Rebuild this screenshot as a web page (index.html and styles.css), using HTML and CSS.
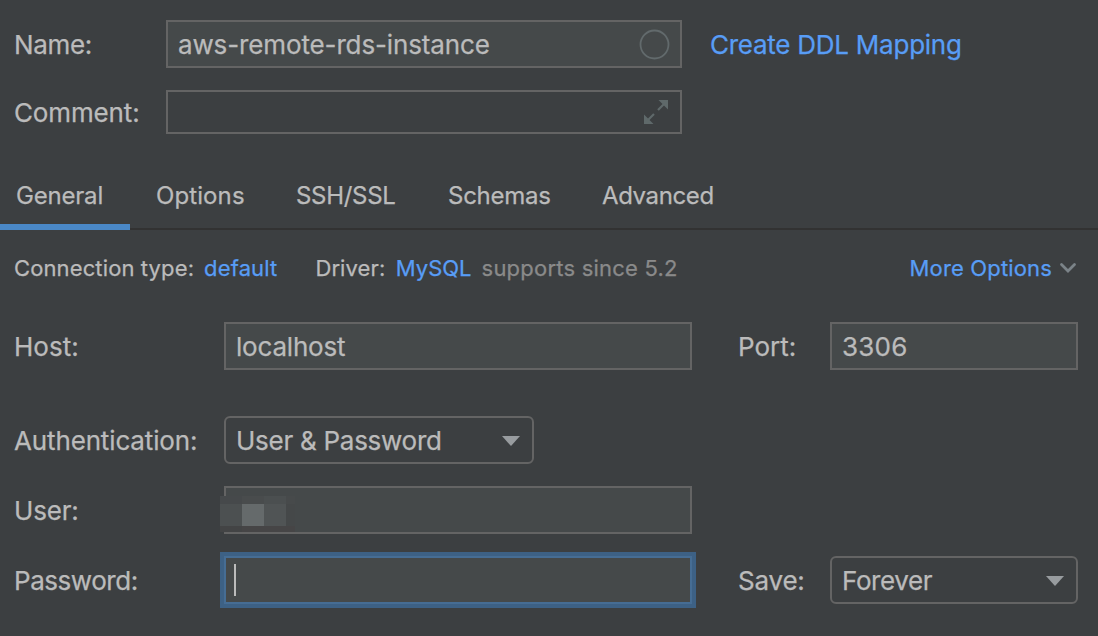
FILE: index.html
```html
<!DOCTYPE html>
<html lang="en">
<head>
<meta charset="utf-8">
<title>Data Source</title>
<link rel="stylesheet" href="styles.css">
</head>
<body>
<main class="dialog">
  <div class="row row-name">
    <label class="label"><span class="t-name">Name:</span></label>
    <div class="field name-field"><span class="value t-instance">aws-remote-rds-instance</span>
      <svg class="ring" width="32" height="32" viewBox="0 0 32 32"><circle cx="16.5" cy="16.5" r="14" fill="none" stroke="#626a6c" stroke-width="1.8"/></svg>
    </div>
    <a class="link ddl"><span class="t-ddl">Create DDL Mapping</span></a>
  </div>
  <div class="row row-comment">
    <label class="label"><span class="t-comment">Comment:</span></label>
    <div class="field comment-field">
      <svg class="expand" width="26" height="26" viewBox="0 0 26 26"><path d="M15.5 1H25v9.5zM1 15.5V25h9.5z" fill="#5f696a"/><path d="M21 5l-6 6M5 21l6-6" stroke="#5f696a" stroke-width="2.2"/></svg>
    </div>
  </div>
  <nav class="tabs">
    <div class="tab active"><span class="t-general">General</span></div>
    <div class="tab tab-options"><span class="t-options">Options</span></div>
    <div class="tab tab-ssh"><span class="t-ssh">SSH/SSL</span></div>
    <div class="tab tab-schemas"><span class="t-schemas">Schemas</span></div>
    <div class="tab"><span class="t-advanced">Advanced</span></div>
  </nav>
  <div class="row row-driver">
    <span class="t-conn">Connection type:</span>
    <a class="link default"><span class="t-default">default</span></a>
    <span class="driver">Driver:</span>
    <a class="link mysql">MySQL</a>
    <span class="muted">supports since 5.2</span>
    <a class="link more"><span class="t-more">More Options</span></a>
    <svg class="chevron" width="18" height="12" viewBox="0 0 18 12"><path d="M2.5 2.5L9 9l6.5-6.5" fill="none" stroke="#7b8388" stroke-width="2.8" stroke-linecap="round"/></svg>
  </div>
  <div class="row row-host">
    <label class="label wide">Host:</label>
    <div class="field long"><span class="value t-local">localhost</span></div>
    <label class="label side">Port:</label>
    <div class="field short"><span class="value t-num">3306</span></div>
  </div>
  <div class="row row-auth">
    <label class="label wide"><span class="t-auth">Authentication:</span></label>
    <div class="combo auth"><span class="value t-userpass">User &amp; Password</span><svg class="arrow" width="18" height="10" viewBox="0 0 18 10"><path d="M0 0h18L9 10z" fill="#989c9f"/></svg></div>
  </div>
  <div class="row row-user">
    <label class="label wide"><span class="t-user">User:</span></label>
    <div class="field long user-field">
      <svg class="redaction" width="75" height="36" viewBox="0 0 75 36" shape-rendering="crispEdges">
        <path d="M0 0h22v8H0z" fill="#46494b"/><path d="M22 0h22v8H22z" fill="#494c4d"/><path d="M44 0h22v8H44z" fill="#4b4f50"/><path d="M66 0h9v8h-9z" fill="#474a4b"/>
        <path d="M0 8h22v22H0z" fill="#4c5051"/><path d="M22 8h22v22H22z" fill="#656a6b"/><path d="M44 8h22v22H44z" fill="#505455"/><path d="M66 8h9v22h-9z" fill="#454849"/>
        <path d="M0 30h22v6H0z" fill="#434445"/><path d="M22 30h53v6H22z" fill="#464546"/>
      </svg>
    </div>
  </div>
  <div class="row row-pass">
    <label class="label wide"><span class="t-pass">Password:</span></label>
    <div class="field long focused"><span class="caret"></span></div>
    <label class="label side"><span class="t-save">Save:</span></label>
    <div class="combo short"><span class="value t-forever">Forever</span><svg class="arrow" width="18" height="10" viewBox="0 0 18 10"><path d="M0 0h18L9 10z" fill="#989c9f"/></svg></div>
  </div>
</main>
</body>
</html>
```
FILE: styles.css
```css
* { box-sizing: border-box; }
body { margin: 0; background: #3c3f41; color: #bbbbbb; font: 26px/32px Inter, sans-serif; -webkit-text-stroke: 0.25px currentColor; }
.dialog { width: 1098px; height: 636px; padding-top: 20px; overflow: hidden; }
.row { display: flex; align-items: center; padding-left: 14px; height: 48px; white-space: nowrap; }
.label { width: 152px; flex: none; padding-top: 2px; }
.value { padding-top: 2px; }
.wide { width: 210px; }
.side { width: 92px; margin-left: 46px; }
.link { color: #589df6; }
.field, .combo { display: flex; align-items: center; height: 48px; padding-left: 10px; border: 2px solid #646464; background: #45494a; flex: none; }
.name-field, .comment-field { width: 516px; justify-content: space-between; padding-right: 10px; }
.row-comment { margin-top: 22px; height: 44px; }
.comment-field { height: 44px; justify-content: flex-end; padding-right: 11px; background: #3c3f41; }
.ddl { margin-left: 28px; padding-top: 2px; }
.tabs { display: flex; height: 96px; border-bottom: 2px solid #323232; font-size: 24px; }
.tab { padding: 46px 0 0 26px; height: 96px; white-space: nowrap; }
.tab.active { width: 130px; padding-left: 16px; border-bottom: 6px solid #4a88c7; }
.tab-options { width: 140px; }
.tab-ssh { width: 152px; }
.tab-schemas { width: 154px; }
.row-driver { font-size: 22px; height: 76px; }
.long { width: 468px; }
.short { width: 248px; }
.row-host { margin-top: 16px; }
.row-auth { margin-top: 46px; }
.auth { width: 310px; }
.combo { border-radius: 6px; background: #3c3f41; justify-content: space-between; padding-right: 12px; }
.arrow { margin-top: 2px; }
.row-user, .row-pass { margin-top: 22px; }
.default { margin-left: 10px; }
.driver { margin-left: 38px; letter-spacing: 0.1px; }
.mysql { margin-left: 10.5px; }
.muted { color: #8a8a8a; margin-left: 10px; letter-spacing: 0.22px; }
.more { margin-left: auto; }
.chevron { margin: 0 21px 0 7px; }
.user-field { position: relative; }
.redaction { position: absolute; left: -6px; top: 8px; }
.focused { border-color: #466d94; box-shadow: 0 0 0 4px #3d6185; }
.caret { width: 2px; height: 32px; background: #bbbbbb; margin-left: -2px; }
.t-name { letter-spacing: -0.35px; }
.t-comment { letter-spacing: -0.14px; }
.t-instance { letter-spacing: -0.13px; }
.t-ddl { letter-spacing: -0.25px; }
.t-general { letter-spacing: -0.2px; }
.t-options { letter-spacing: 0.1px; }
.t-ssh { letter-spacing: -0.3px; }
.t-schemas { letter-spacing: -0.25px; }
.t-advanced { letter-spacing: -0.38px; }
.t-conn { letter-spacing: 0.12px; }
.t-default { letter-spacing: 0.14px; }
.t-more { letter-spacing: 0.15px; }
.t-local { letter-spacing: -0.2px; }
.t-num { letter-spacing: 0.25px; }
.t-auth { letter-spacing: -0.14px; }
.t-userpass { letter-spacing: -0.27px; }
.t-user, .t-save { letter-spacing: -0.2px; }
.t-pass { letter-spacing: -0.45px; }
.t-forever { letter-spacing: -0.4px; }
```
